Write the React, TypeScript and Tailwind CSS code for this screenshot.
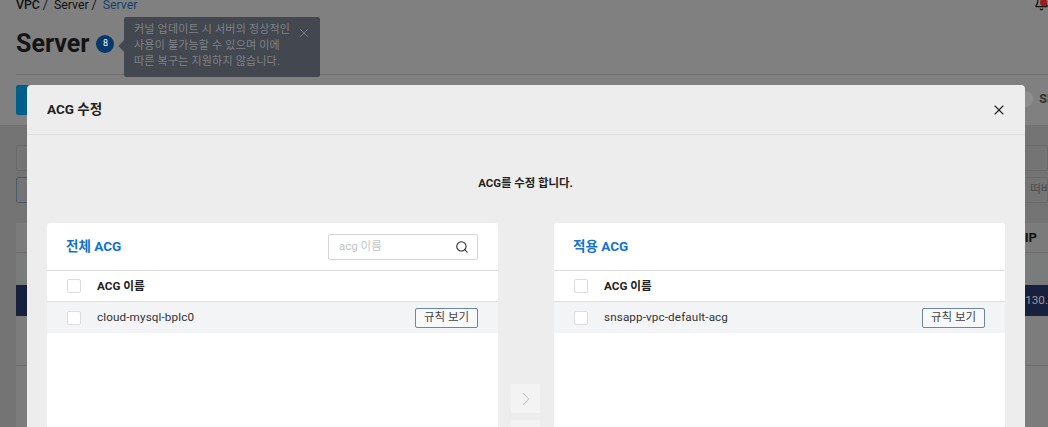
import { Search, X, ChevronRight, Bell } from "lucide-react";

const font = "font-['Roboto','Noto_Sans_CJK_KR',sans-serif]";

function Check() {
  return <span className="block w-[14px] h-[14px] shrink-0 bg-white border border-[#dcdcdc] rounded-[2px]" />;
}

function Panel({ title, row, search }: { title: string; row: string; search?: boolean }) {
  return (
    <div className="w-[451px] h-[300px] shrink-0 bg-white rounded-[3px]">
      <div className="h-[48px] flex items-center justify-between pl-[19px] pr-[20px] border-b border-[#dddddd]">
        <span className="text-[13.5px] font-bold text-[#0f73d0]">{title}</span>
        {search && (
          <div className="w-[150px] h-[26px] border border-[#d5d5d5] rounded-[2px] flex items-center justify-between pl-[10px] pr-[8px]">
            <span className="text-[11.5px] text-[#c4c4c4]">acg 이름</span>
            <Search size={14} strokeWidth={1.8} className="text-[#222]" />
          </div>
        )}
      </div>
      <div className="h-[31px] flex items-center pl-[20px] gap-[16px] border-b border-[#dddddd]">
        <Check />
        <span className="text-[11.7px] font-bold text-[#222] pt-[1px]">ACG 이름</span>
      </div>
      <div className="h-[31px] flex items-center pl-[20px] pr-[20px] gap-[16px] bg-[#f3f4f6]">
        <Check />
        <span className="text-[11.7px] tracking-[0.12px] text-[#333] flex-1 pt-[1px]">{row}</span>
        <span className="w-[63px] h-[20px] flex items-center justify-center border border-[#6b86a3] rounded-[2px] bg-[#f8f9fb] text-[11.5px] text-[#444]">규칙 보기</span>
      </div>
    </div>
  );
}

export default function App() {
  return (
    <div className={`${font} relative w-[1048px] h-[427px] overflow-hidden bg-[#808080]`}>
      <div className="h-[125px] pl-[16px] relative">
        <div className="h-[10px] flex items-center text-[12.3px] leading-[10px] text-[#111]">
          <b className="font-medium">VPC</b><span className="ml-[3px]">/</span>
          <span className="ml-[6px]">Server</span><span className="ml-[3px]">/</span>
          <span className="ml-[6px] text-[#14406c]">Server</span>
        </div>
        <div className="h-[65px] pt-[4px] flex items-center gap-[7px] border-b border-[#6e6e6e]">
          <span className="text-[25px] font-bold text-[#141414]">Server</span>
          <span className="w-[18px] h-[18px] rounded-full bg-[#05386b] text-white text-[9px] flex items-center justify-center">8</span>
        </div>
        <div className="mt-[10px] w-[60px] h-[30px] bg-[#005f88] rounded-[2px]" />
        <div className="absolute right-[-7px] top-[90px] flex items-center gap-[6px] text-[12.5px] font-bold text-[#333]">
          <span className="w-[16px] h-[16px] rounded-full bg-[#8e8e8e]" />
          <span>SR</span>
        </div>
        <Bell size={15} strokeWidth={2} className="absolute right-[-1px] top-[-4px] text-[#111]" />
        <span className="absolute right-[1px] top-[-1px] w-[7px] h-[7px] rounded-full bg-[#9c1c1c]" />
      </div>
      <div className="h-[302px] bg-[#747474] pl-[16px] pt-[20px]">
        <div className="w-full h-[26px] border border-[#6b6b6b] rounded-[2px]" />
        <div className="mt-[6px] h-[26px] flex">
          <div className="w-[60px] border border-[#4a5a70] rounded-[2px]" />
          <div className="flex-1 flex items-center justify-end border border-[#6b6b6b] rounded-[2px]">
            <span className="text-[11.5px] text-[#4a4a4a] mr-[-15px]">떠바이</span>
          </div>
        </div>
        <div className="mt-[20px] h-[30px] bg-[#7b7b7b] border-b border-[#6e6e6e] flex items-center justify-end">
          <span className="text-[13px] font-bold text-[#111] mr-[11px]">IP</span>
        </div>
        <div className="h-[32px] bg-[#7a7c7c]" />
        <div className="h-[31px] bg-[#17203d] flex items-center justify-end text-[11.7px] text-[#999]">130.</div>
        <div className="h-[50px] bg-[#7c7c7c] border-b border-[#6e6e6e]" />
        <div className="h-[61px] bg-[#7c7c7c]" />
      </div>

      {/* tooltip */}
      <div className="absolute left-[124px] top-[17px] w-[196px] h-[60px] bg-[#43474f] rounded-[2px] pl-[10px] pt-[5px] text-[11px] leading-[16px] text-[#7f8288]">
        <span className="absolute left-[-4px] top-[25px] w-[8px] h-[8px] rotate-45 bg-[#43474f]" />
        <X size={14} strokeWidth={1.5} className="absolute right-[9px] top-[9px] text-[#80838a]" />
        <div className="tracking-[0.2px]">커널 업데이트 시 서버의 정상적인<br />사용이 불가능할 수 있으며 이에<br />따른 복구는 지원하지 않습니다.</div>
      </div>

      {/* modal */}
      <div className="absolute left-[27px] top-[85px] w-[998px] h-[360px] bg-[#ededed] rounded-[4px]">
        <div className="h-[50px] flex items-center justify-between pl-[20px] pr-[18px] border-b border-[#dfdfdf]">
          <span className="text-[13.5px] font-bold text-[#222]">ACG 수정</span>
          <X size={16} strokeWidth={1.7} className="text-[#222]" />
        </div>
        <div className="h-[88px] flex items-center justify-center text-[11.4px] font-bold text-[#222] pt-[9px] pr-[1px]">ACG를 수정 합니다.</div>
        <div className="flex items-start px-[20px]">
          <Panel title="전체 ACG" row="cloud-mysql-bplc0" search />
          <div className="w-[56px] shrink-0 flex flex-col items-center pt-[161px] gap-[7px] pr-[1px]">
            <span className="w-[29px] h-[29px] bg-[#f3f3f3] rounded-[2px] flex items-center justify-center">
              <ChevronRight size={22} strokeWidth={1} className="text-[#b5b5b5]" />
            </span>
            <span className="w-[29px] h-[29px] bg-[#f3f3f3] rounded-[2px]" />
          </div>
          <Panel title="적용 ACG" row="snsapp-vpc-default-acg" />
        </div>
      </div>
    </div>
  );
}
